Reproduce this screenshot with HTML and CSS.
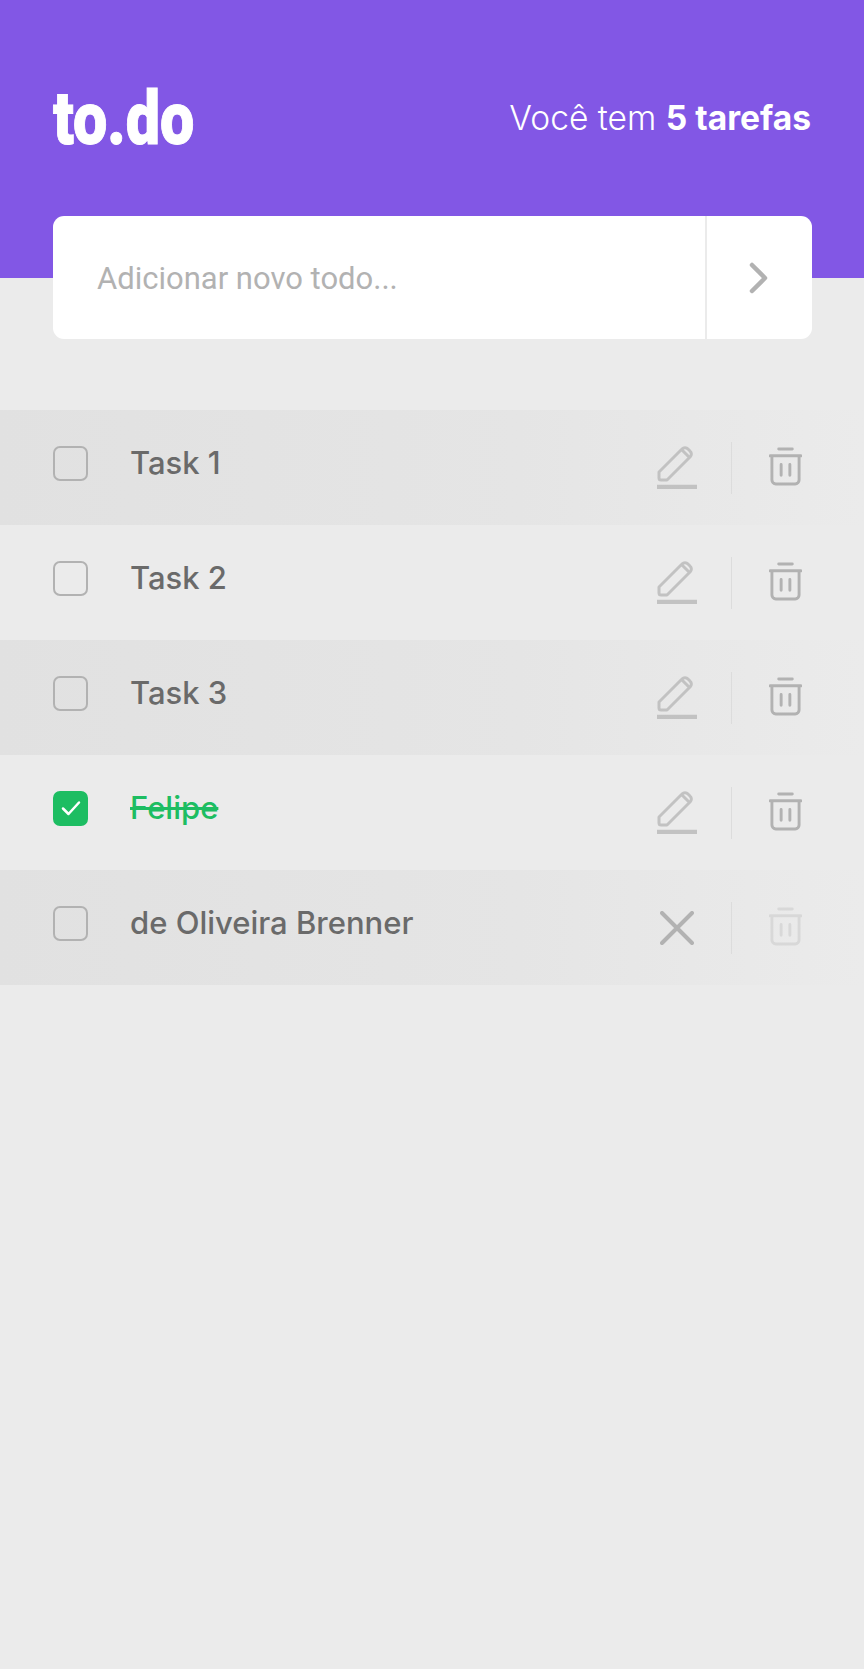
FILE: index.html
```html
<!DOCTYPE html>
<html lang="pt-BR">
<head>
<meta charset="utf-8">
<title>to.do</title>
<link rel="stylesheet" href="styles.css">
</head>
<body>
<header class="header">
  <div class="header-top">
    <div class="logo"><span class="logo-text">to.do</span></div>
    <p class="counter">Você tem <strong>5 tarefas</strong></p>
  </div>
</header>
<form class="add-form">
  <span class="add-input">Adicionar novo todo...</span>
  <span class="add-button">
    <svg class="chevron" viewBox="0 0 20 32"><path d="M3 3 L16 16 L3 29"/></svg>
  </span>
</form>
<ul class="list">
  <li class="row stripe">
    <span class="check"></span><span class="label">Task 1</span>
    <span class="actions">
      <svg class="icon pencil" viewBox="0 0 44 44"><path d="M4 27 L27 4 a4 4 0 0 1 6 0 l2 2 a4 4 0 0 1 0 6 L12 35 H6 a2 2 0 0 1 -2 -2 Z M27 5 L34 12"/><path class="bar" d="M2 42 H42"/></svg>
      <span class="sep"></span>
      <svg class="icon trash" viewBox="0 0 34 40"><path d="M10 2 H24 M1 9 H33 M3 9 V34 a4 4 0 0 0 4 4 H27 a4 4 0 0 0 4 -4 V9 M12.500 18 V29 M21.500 18 V29"/></svg>
    </span>
  </li>
  <li class="row">
    <span class="check"></span><span class="label">Task 2</span>
    <span class="actions">
      <svg class="icon pencil" viewBox="0 0 44 44"><path d="M4 27 L27 4 a4 4 0 0 1 6 0 l2 2 a4 4 0 0 1 0 6 L12 35 H6 a2 2 0 0 1 -2 -2 Z M27 5 L34 12"/><path class="bar" d="M2 42 H42"/></svg>
      <span class="sep"></span>
      <svg class="icon trash" viewBox="0 0 34 40"><path d="M10 2 H24 M1 9 H33 M3 9 V34 a4 4 0 0 0 4 4 H27 a4 4 0 0 0 4 -4 V9 M12.500 18 V29 M21.500 18 V29"/></svg>
    </span>
  </li>
  <li class="row stripe">
    <span class="check"></span><span class="label">Task 3</span>
    <span class="actions">
      <svg class="icon pencil" viewBox="0 0 44 44"><path d="M4 27 L27 4 a4 4 0 0 1 6 0 l2 2 a4 4 0 0 1 0 6 L12 35 H6 a2 2 0 0 1 -2 -2 Z M27 5 L34 12"/><path class="bar" d="M2 42 H42"/></svg>
      <span class="sep"></span>
      <svg class="icon trash" viewBox="0 0 34 40"><path d="M10 2 H24 M1 9 H33 M3 9 V34 a4 4 0 0 0 4 4 H27 a4 4 0 0 0 4 -4 V9 M12.500 18 V29 M21.500 18 V29"/></svg>
    </span>
  </li>
  <li class="row">
    <span class="check done"><svg class="tick" viewBox="0 0 20 16"><path d="M2 8.500 L7.500 14 L18 2.500"/></svg></span><span class="label label-done">Felipe</span>
    <span class="actions">
      <svg class="icon pencil" viewBox="0 0 44 44"><path d="M4 27 L27 4 a4 4 0 0 1 6 0 l2 2 a4 4 0 0 1 0 6 L12 35 H6 a2 2 0 0 1 -2 -2 Z M27 5 L34 12"/><path class="bar" d="M2 42 H42"/></svg>
      <span class="sep"></span>
      <svg class="icon trash" viewBox="0 0 34 40"><path d="M10 2 H24 M1 9 H33 M3 9 V34 a4 4 0 0 0 4 4 H27 a4 4 0 0 0 4 -4 V9 M12.500 18 V29 M21.500 18 V29"/></svg>
    </span>
  </li>
  <li class="row stripe">
    <span class="check"></span><span class="label">de Oliveira Brenner</span>
    <span class="actions">
      <svg class="icon close" viewBox="0 0 34 34"><path d="M2 2 L32 32 M32 2 L2 32"/></svg>
      <span class="sep"></span>
      <svg class="icon trash faded" viewBox="0 0 34 40"><path d="M10 2 H24 M1 9 H33 M3 9 V34 a4 4 0 0 0 4 4 H27 a4 4 0 0 0 4 -4 V9 M12.500 18 V29 M21.500 18 V29"/></svg>
    </span>
  </li>
</ul>
</body>
</html>
```
FILE: styles.css
```css
* { box-sizing: border-box; }
html, body { margin: 0; padding: 0; }
body {
  height: 1669px;
  background: #ebebeb;
  font-family: "Inter", "Liberation Sans", sans-serif;
  overflow: hidden;
}
.header {
  height: 278px;
  background: #8257e5;
  padding: 88px 53px 0;
}
.header-top {
  display: flex;
  justify-content: space-between;
  align-items: flex-start;
}
.logo {
  width: 141px;
  height: 58px;
}
.logo-text {
  display: block;
  width: max-content;
  font-family: "Roboto", sans-serif;
  font-weight: 900;
  font-size: 75px;
  line-height: 60px;
  color: #fff;
  -webkit-text-stroke: 1px #fff;
  transform-origin: left top;
  transform: scaleX(0.813);
}
.counter {
  margin: 12px 0 0;
  font-size: 33.6px;
  line-height: 36px;
  font-weight: 300;
  color: #fff;
}
.counter strong { font-weight: 700; }
.add-form {
  display: flex;
  height: 123px;
  margin: -62px 52.500px 0 53px;
  background: #fff;
  border-radius: 11px;
  position: relative;
}
.add-input {
  flex: 1;
  display: flex;
  align-items: center;
  padding: 2px 0 0 44px;
  font-family: "Roboto", sans-serif;
  font-size: 31px;
  color: #b2b2b2;
}
.add-button {
  width: 107px;
  border-left: 2px solid #ebebeb;
  display: flex;
  align-items: center;
  justify-content: center;
}
.chevron {
  width: 20px;
  height: 32px;
  fill: none;
  stroke: #b2b2b2;
  stroke-width: 4.5px;
  stroke-linecap: round;
  stroke-linejoin: round;
}
.list {
  list-style: none;
  margin: 71px 0 0;
  padding: 0;
}
.row {
  height: 115px;
  display: flex;
  align-items: center;
  padding-left: 53px;
}
.stripe {
  background: linear-gradient(90deg, #e1e1e1 0%, #e5e5e5 60%, #ebebeb 100%);
}
.check {
  width: 35px;
  height: 35px;
  margin-bottom: 9px;
  border: 2px solid #b2b2b2;
  border-radius: 7px;
  display: flex;
  align-items: center;
  justify-content: center;
  flex: none;
  filter: blur(.3px);
}
.check.done {
  background: #1dbd62;
  border-color: #1dbd62;
  filter: none;
}
.tick {
  width: 20px;
  height: 16px;
  fill: none;
  stroke: #fff;
  stroke-width: 2.5px;
  stroke-linecap: round;
  stroke-linejoin: round;
}
.label {
  margin: 0 0 11px 42px;
  font-size: 31px;
  font-weight: 500;
  color: #6a6a6a;
}
.label-done {
  color: #1dbd62;
  text-decoration: line-through;
}
.actions {
  margin-left: auto;
  display: flex;
  align-items: center;
  padding-right: 62px;
}
.icon {
  fill: none;
  stroke: #b2b2b2;
  stroke-linecap: round;
  stroke-linejoin: round;
  stroke-width: 3px;
  flex: none;
}
.pencil {
  width: 44px;
  height: 44px;
  margin-bottom: 2px;
  opacity: .7;
  filter: blur(.7px);
}
.pencil .bar { stroke-width: 4.5px; stroke-linecap: butt; }
.close {
  width: 34px;
  height: 34px;
  margin: 0 5px;
  stroke-width: 4px;
}
.trash {
  width: 33px;
  height: 39px;
  margin-bottom: 2px;
  filter: blur(.4px);
}
.faded { opacity: .3; }
.sep {
  width: 1px;
  height: 52px;
  background: #dcdcdc;
  margin: 0 37px 0 32px;
}
```
